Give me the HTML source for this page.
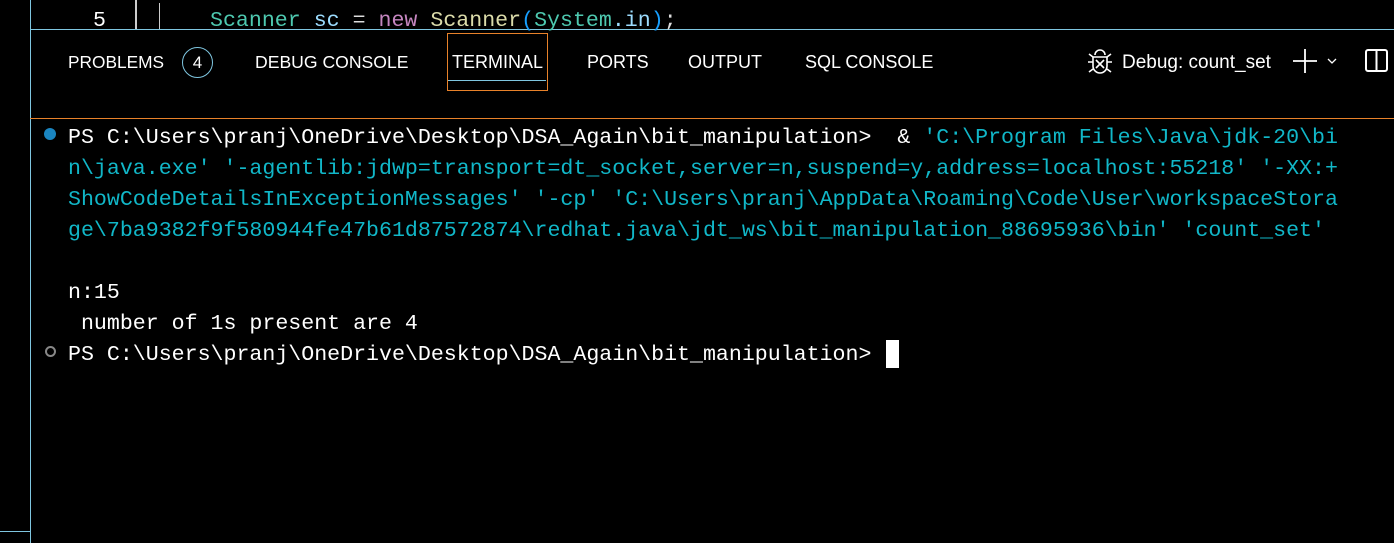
<!DOCTYPE html>
<html><head><meta charset="utf-8"><style>
html,body{margin:0;padding:0;background:#000;width:1394px;height:543px;overflow:hidden;position:relative}
.m{font-family:"Liberation Mono",monospace;font-size:21.6px;position:absolute;white-space:pre;line-height:31px}
.s{font-family:"Liberation Sans",sans-serif;font-size:18px;color:#fff;position:absolute;top:52px;white-space:pre}
.c{color:#11b7c8}
</style></head><body>
<div style="position:absolute;left:30px;top:0;width:1px;height:543px;background:#7fc6e0"></div>
<div style="position:absolute;left:0;top:531px;width:30px;height:1px;background:#7fc6e0"></div>
<div style="position:absolute;left:30px;top:29px;width:1364px;height:1px;background:#7fc6e0"></div>
<div style="position:absolute;left:30px;top:118px;width:1364px;height:1px;background:#e8822a"></div>
<div style="position:absolute;left:135px;top:0;width:2px;height:29px;background:#ccc"></div>
<div style="position:absolute;left:159px;top:3px;width:1px;height:26px;background:#ccc"></div>
<div class="m" style="left:93px;top:6px;color:#fff">5</div>
<div class="m" style="left:210px;top:6px"><span style="color:#4ec9b0">Scanner</span> <span style="color:#9cdcfe">sc</span> <span style="color:#ddd">=</span> <span style="color:#c586c0">new</span> <span style="color:#dcdcaa">Scanner</span><span style="color:#179fff">(</span><span style="color:#4ec9b0">System</span><span style="color:#9cdcfe">.in</span><span style="color:#179fff">)</span><span style="color:#ddd">;</span></div>

<div class="s" style="left:68px;font-size:17.3px">PROBLEMS</div>
<div style="position:absolute;left:182px;top:47px;width:31px;height:31px;border:1px solid #7fc6e0;border-radius:50%;box-sizing:border-box;color:#fff;font-family:'Liberation Sans',sans-serif;font-size:17px;text-align:center;line-height:29px">4</div>
<div class="s" style="left:255px;font-size:17.6px">DEBUG CONSOLE</div>
<div style="position:absolute;left:447px;top:33px;width:99px;height:56px;border:1px solid #e8822a"></div>
<div style="position:absolute;left:448px;top:80px;width:98px;height:1px;background:#7fc6e0"></div>
<div class="s" style="left:452px">TERMINAL</div>
<div class="s" style="left:587px">PORTS</div>
<div class="s" style="left:688px">OUTPUT</div>
<div class="s" style="left:805px">SQL CONSOLE</div>
<svg style="position:absolute;left:1085px;top:47px" width="30" height="30" viewBox="0 0 30 30" fill="none" stroke="#fff" stroke-width="1.6">
<path d="M10 8a5 5 0 0 1 10 0"/><path d="M8 10h14v9a7 7 0 0 1-14 0z"/><path d="M11 13l8 8M19 13l-8 8"/><path d="M3 15h5M22 15h5M4 7l4 3M26 7l-4 3M4 25l4-3M26 25l-4-3"/></svg>
<div class="s" style="left:1122px;font-size:19px">Debug: count_set</div>
<svg style="position:absolute;left:1292px;top:48px" width="50" height="26" viewBox="0 0 50 26" fill="none" stroke="#fff" stroke-width="1.8"><path d="M13 1v24M1 13h24"/><path stroke-width="1.3" d="M36 11l4 4 4-4"/></svg>
<svg style="position:absolute;left:1364px;top:48px" width="26" height="26" viewBox="0 0 26 26" fill="none" stroke="#fff" stroke-width="2"><rect x="2" y="2" width="21" height="21" rx="2"/><path d="M12.5 2v21"/></svg>

<div style="position:absolute;left:44px;top:128px;width:12px;height:12px;border-radius:50%;background:#1a85c0"></div>
<div style="position:absolute;left:45px;top:346px;width:11px;height:11px;border-radius:50%;border:2px solid #888;box-sizing:border-box"></div>
<div class="m" style="left:68px;top:123px;color:#fff">PS C:\Users\pranj\OneDrive\Desktop\DSA_Again\bit_manipulation>  <span style="color:#fff">&amp;</span> <span class="c">'C:\Program Files\Java\jdk-20\bi</span></div>
<div class="m c" style="left:68px;top:154px">n\java.exe' '-agentlib:jdwp=transport=dt_socket,server=n,suspend=y,address=localhost:55218' '-XX:+</div>
<div class="m c" style="left:68px;top:185px">ShowCodeDetailsInExceptionMessages' '-cp' 'C:\Users\pranj\AppData\Roaming\Code\User\workspaceStora</div>
<div class="m c" style="left:68px;top:216px">ge\7ba9382f9f580944fe47b61d87572874\redhat.java\jdt_ws\bit_manipulation_88695936\bin' 'count_set'</div>
<div class="m" style="left:68px;top:278px;color:#fff">n:15</div>
<div class="m" style="left:68px;top:309px;color:#fff"> number of 1s present are 4</div>
<div class="m" style="left:68px;top:340px;color:#fff">PS C:\Users\pranj\OneDrive\Desktop\DSA_Again\bit_manipulation></div>
<div style="position:absolute;left:886px;top:340px;width:13px;height:28px;background:#fff"></div>
</body></html>
